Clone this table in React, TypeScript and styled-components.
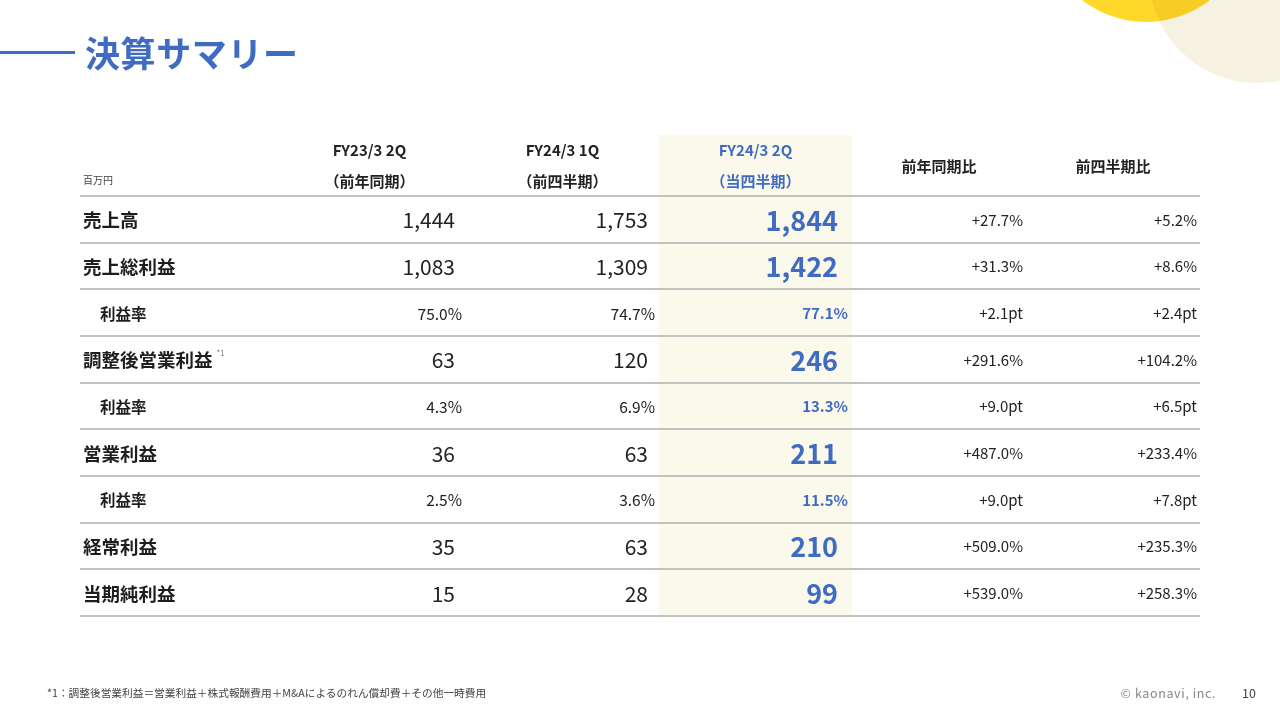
import React from "react";
import styled, { createGlobalStyle } from "styled-components";

const GlobalStyle = createGlobalStyle`
  html, body {
    margin: 0;
    padding: 0;
    background: #ffffff;
  }
  body {
    font-family: "Noto Sans CJK JP", "Noto Sans", sans-serif;
    color: #222;
  }
`;

const BLUE = "#3f6cc2";
const LINE = "#c2c2c2";
const HILITE = "#fbf8ec";

const Slide = styled.div`
  position: relative;
  width: 1280px;
  height: 720px;
  overflow: hidden;
  display: flex;
  flex-direction: column;
`;

const Deco = styled.svg`
  position: absolute;
  top: 0;
  right: 0;
`;

const TitleBar = styled.div`
  display: flex;
  align-items: center;
  gap: 10px;
  padding-top: 30px;
  height: 44px;
`;

const TitleRule = styled.div`
  width: 75px;
  height: 3px;
  background: ${BLUE};
`;

const Title = styled.h1`
  margin: 0;
  font-size: 35px;
  font-weight: 700;
  color: ${BLUE};
  letter-spacing: 0.6px;
  line-height: 44px;
`;

const Table = styled.div`
  margin: 61px 0 0 80px;
  width: 1120px;
`;

const Row = styled.div<{ $head?: boolean }>`
  box-sizing: border-box;
  display: grid;
  grid-template-columns: 193px 193px 193px 193px 174px 174px;
  height: ${(p) => (p.$head ? "62px" : "46.67px")};
  border-bottom: 2px solid ${LINE};
`;

const Cell = styled.div<{ $hl?: boolean; $pad?: number }>`
  display: flex;
  align-items: center;
  justify-content: flex-end;
  padding-right: ${(p) => p.$pad ?? 4}px;
  background: ${(p) => (p.$hl ? HILITE : "transparent")};
`;

const HeadCell = styled.div<{ $hl?: boolean }>`
  display: flex;
  flex-direction: column;
  align-items: center;
  justify-content: center;
  gap: 8px;
  font-size: 15px;
  font-weight: 700;
  color: ${(p) => (p.$hl ? BLUE : "#222")};
  background: ${(p) => (p.$hl ? HILITE : "transparent")};
  line-height: 23px;
`;

const UnitCell = styled.div`
  display: flex;
  align-items: flex-end;
  padding: 0 0 8px 3px;
  font-size: 10px;
  color: #444;
`;

const Label = styled.div<{ $sub?: boolean }>`
  display: flex;
  align-items: center;
  padding-left: ${(p) => (p.$sub ? 20 : 3)}px;
  font-size: ${(p) => (p.$sub ? 15.5 : 18.5)}px;
  font-weight: 700;
  color: #1e1e1e;
`;

const Note = styled.sup`
  font-size: 8px;
  font-weight: 400;
  color: #777;
  margin-left: 4px;
  align-self: flex-start;
  margin-top: 10px;
`;

const Num = styled.span<{ $big?: boolean; $hl?: boolean }>`
  font-size: ${(p) => (p.$hl ? (p.$big ? 27 : 15) : p.$big ? 21 : 15.5)}px;
  font-weight: ${(p) => (p.$hl ? 700 : 400)};
  color: ${(p) => (p.$hl ? BLUE : "#222")};
`;

const Change = styled.span`
  font-size: 15px;
  color: #222;
`;

const Footer = styled.div`
  margin-top: auto;
  display: flex;
  align-items: center;
  height: 44px;
  padding: 0 0 6px 47px;
`;

const FootNote = styled.div`
  flex: 1;
  font-size: 10.7px;
  color: #444;
`;

const Copy = styled.div`
  font-size: 12.5px;
  color: #888;
  letter-spacing: 0.6px;
`;

const PageNo = styled.div`
  width: 64px;
  text-align: right;
  padding-right: 24px;
  box-sizing: border-box;
  font-size: 12.5px;
  color: #444;
`;

type Line = {
  label: string;
  sub?: boolean;
  note?: string;
  vals: [string, string, string];
  yoy: string;
  qoq: string;
};

const rows: Line[] = [
  { label: "売上高", vals: ["1,444", "1,753", "1,844"], yoy: "+27.7%", qoq: "+5.2%" },
  { label: "売上総利益", vals: ["1,083", "1,309", "1,422"], yoy: "+31.3%", qoq: "+8.6%" },
  { label: "利益率", sub: true, vals: ["75.0%", "74.7%", "77.1%"], yoy: "+2.1pt", qoq: "+2.4pt" },
  { label: "調整後営業利益", note: "*1", vals: ["63", "120", "246"], yoy: "+291.6%", qoq: "+104.2%" },
  { label: "利益率", sub: true, vals: ["4.3%", "6.9%", "13.3%"], yoy: "+9.0pt", qoq: "+6.5pt" },
  { label: "営業利益", vals: ["36", "63", "211"], yoy: "+487.0%", qoq: "+233.4%" },
  { label: "利益率", sub: true, vals: ["2.5%", "3.6%", "11.5%"], yoy: "+9.0pt", qoq: "+7.8pt" },
  { label: "経常利益", vals: ["35", "63", "210"], yoy: "+509.0%", qoq: "+235.3%" },
  { label: "当期純利益", vals: ["15", "28", "99"], yoy: "+539.0%", qoq: "+258.3%" },
];

export default function App() {
  return (
    <>
      <GlobalStyle />
      <Slide>
        <Deco width="240" height="130" viewBox="0 0 240 130">
          <circle cx="217" cy="-25" r="108" fill="#f7f1e1" />
          <circle cx="106" cy="-82" r="104" fill="#ffd829" style={{ mixBlendMode: "multiply" }} />
        </Deco>

        <TitleBar>
          <TitleRule />
          <Title>決算サマリー</Title>
        </TitleBar>

        <Table>
          <Row $head>
            <UnitCell>百万円</UnitCell>
            <HeadCell>
              <span>FY23/3 2Q</span>
              <span>（前年同期）</span>
            </HeadCell>
            <HeadCell>
              <span>FY24/3 1Q</span>
              <span>（前四半期）</span>
            </HeadCell>
            <HeadCell $hl>
              <span>FY24/3 2Q</span>
              <span>（当四半期）</span>
            </HeadCell>
            <HeadCell>前年同期比</HeadCell>
            <HeadCell>前四半期比</HeadCell>
          </Row>
          {rows.map((r, i) => (
            <Row key={i}>
              <Label $sub={r.sub}>
                {r.label}
                {r.note && <Note>{r.note}</Note>}
              </Label>
              <Cell $pad={r.sub ? 4 : 11}>
                <Num $big={!r.sub}>{r.vals[0]}</Num>
              </Cell>
              <Cell $pad={r.sub ? 4 : 11}>
                <Num $big={!r.sub}>{r.vals[1]}</Num>
              </Cell>
              <Cell $hl $pad={r.sub ? 4 : 14}>
                <Num $hl $big={!r.sub}>{r.vals[2]}</Num>
              </Cell>
              <Cell $pad={3}>
                <Change>{r.yoy}</Change>
              </Cell>
              <Cell $pad={3}>
                <Change>{r.qoq}</Change>
              </Cell>
            </Row>
          ))}
        </Table>

        <Footer>
          <FootNote>*1：調整後営業利益＝営業利益＋株式報酬費用＋M&amp;Aによるのれん償却費＋その他一時費用</FootNote>
          <Copy>© kaonavi, inc.</Copy>
          <PageNo>10</PageNo>
        </Footer>
      </Slide>
    </>
  );
}
